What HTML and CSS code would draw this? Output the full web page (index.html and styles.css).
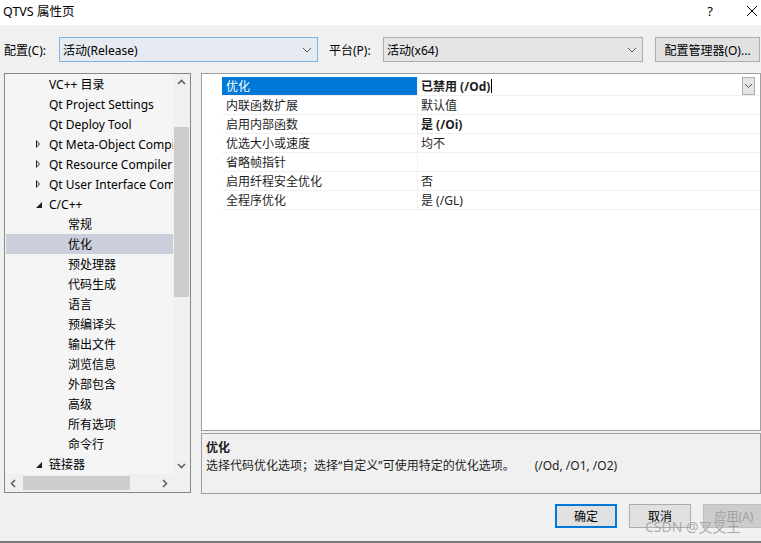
FILE: index.html
```html
<!DOCTYPE html>
<html lang="zh-CN">
<head>
    <meta charset="UTF-8">
    <meta name="viewport" content="width=device-width, initial-scale=1.0">
    <title>QTVS 属性页</title>
    <link rel="stylesheet" href="styles.css">
</head>
<body>

<div class="dialog">
    <div class="titlebar">
        <span class="title">QTVS 属性页</span>
        <span class="help">?</span>
        <svg class="close" width="12" height="12" viewBox="0 0 12 12">
            <path d="M1 1 L11 11 M11 1 L1 11" stroke="#000" stroke-width="1" fill="none"/>
        </svg>
    </div>

    <div class="config-row">
        <label class="cfg-label">配置(C):</label>
        <div class="combo combo-active">
            <span>活动(Release)</span>
            <svg class="chev" width="10" height="6" viewBox="0 0 10 6"><path d="M1 1 L5 5 L9 1" stroke="#555" fill="none"/></svg>
        </div>
        <label class="cfg-label plat-label">平台(P):</label>
        <div class="combo combo-plat">
            <span>活动(x64)</span>
            <svg class="chev" width="10" height="6" viewBox="0 0 10 6"><path d="M1 1 L5 5 L9 1" stroke="#555" fill="none"/></svg>
        </div>
        <button class="btn cfg-manager">配置管理器(O)...</button>
    </div>

    <div class="main">
        <div class="tree-box">
            <div class="tree-top">
                <ul class="tree">
                    <li class="lv1">VC++ 目录</li>
                    <li class="lv1">Qt Project Settings</li>
                    <li class="lv1">Qt Deploy Tool</li>
                    <li class="lv1 closed">Qt Meta-Object Compiler</li>
                    <li class="lv1 closed">Qt Resource Compiler</li>
                    <li class="lv1 closed">Qt User Interface Compiler</li>
                    <li class="lv1 open">C/C++</li>
                    <li class="lv2">常规</li>
                    <li class="lv2 selected">优化</li>
                    <li class="lv2">预处理器</li>
                    <li class="lv2">代码生成</li>
                    <li class="lv2">语言</li>
                    <li class="lv2">预编译头</li>
                    <li class="lv2">输出文件</li>
                    <li class="lv2">浏览信息</li>
                    <li class="lv2">外部包含</li>
                    <li class="lv2">高级</li>
                    <li class="lv2">所有选项</li>
                    <li class="lv2">命令行</li>
                    <li class="lv1 open">链接器</li>
                </ul>
                <div class="vscroll">
                    <svg class="arrow" width="17" height="17" viewBox="0 0 17 17"><path d="M5 10 L8.5 6.5 L12 10" stroke="#606060" stroke-width="1.6" fill="none"/></svg>
                    <div class="vthumb"></div>
                    <div class="vspace"></div>
                    <svg class="arrow" width="17" height="17" viewBox="0 0 17 17"><path d="M5 7 L8.5 10.5 L12 7" stroke="#606060" stroke-width="1.6" fill="none"/></svg>
                </div>
            </div>
            <div class="hscroll">
                <svg class="arrow" width="17" height="17" viewBox="0 0 17 17"><path d="M10 5 L6.5 8.5 L10 12" stroke="#606060" stroke-width="1.6" fill="none"/></svg>
                <div class="hthumb"></div>
                <div class="hspace"></div>
                <svg class="arrow" width="17" height="17" viewBox="0 0 17 17"><path d="M7 5 L10.5 8.5 L7 12" stroke="#606060" stroke-width="1.6" fill="none"/></svg>
                <div class="corner"></div>
            </div>
        </div>

        <div class="right">
            <div class="grid">
                <div class="prop selected">
                    <div class="pname">优化</div>
                    <div class="pvalue bold">已禁用 (/Od)<span class="caret"></span>
                        <span class="drop">
                            <svg width="9" height="6" viewBox="0 0 9 6"><path d="M1 1 L4.5 4.5 L8 1" stroke="#555" fill="none"/></svg>
                        </span>
                    </div>
                </div>
                <div class="prop"><div class="pname">内联函数扩展</div><div class="pvalue">默认值</div></div>
                <div class="prop"><div class="pname">启用内部函数</div><div class="pvalue bold">是 (/Oi)</div></div>
                <div class="prop"><div class="pname">优选大小或速度</div><div class="pvalue">均不</div></div>
                <div class="prop"><div class="pname">省略帧指针</div><div class="pvalue"></div></div>
                <div class="prop"><div class="pname">启用纤程安全优化</div><div class="pvalue">否</div></div>
                <div class="prop"><div class="pname">全程序优化</div><div class="pvalue">是 (/GL)</div></div>
            </div>
            <div class="desc">
                <div class="desc-title">优化</div>
                <div class="desc-text">选择代码优化选项；选择<span class="q">“</span>自定义<span class="q">”</span>可使用特定的优化选项。<span class="desc-flags">(/Od, /O1, /O2)</span></div>
            </div>
        </div>
    </div>

    <div class="footer">
        <button class="btn ok">确定</button>
        <button class="btn">取消</button>
        <button class="btn disabled">应用(A)</button>
        <span class="watermark">CSDN @叉叉王</span>
    </div>
</div>

</body>
</html>
```

FILE: styles.css
```css
* {
    box-sizing: border-box;
}

body {
    margin: 0;
    width: 761px;
    height: 543px;
    overflow: hidden;
    background-color: #f0f0f0;
    font-family: "Noto Sans", "Noto Sans CJK SC", sans-serif;
    font-size: 12px;
    color: #000;
}

.dialog {
    height: 543px;
    border-bottom: 2px solid #7a7a7a;
    display: flex;
    flex-direction: column;
}

.titlebar {
    height: 25px;
    background-color: #fff;
    display: flex;
    align-items: center;
    padding: 0 0 4px 3px;
}

.title {
    font-size: 12.5px;
    flex: 1;
}

.help {
    font-size: 13px;
    margin-right: 33px;
}

.close {
    margin-right: 3px;
}

.config-row {
    display: flex;
    align-items: center;
    margin-top: 12px;
    height: 25px;
}

.cfg-label {
    width: 59px;
    padding-left: 4px;
}

.plat-label {
    width: 65px;
    padding-left: 11px;
}

.combo {
    height: 25px;
    display: flex;
    align-items: center;
    justify-content: space-between;
    padding: 0 5px 0 3px;
}

.combo-active {
    width: 259px;
    border: 1px solid #7eb4ea;
    background-color: #e5ebf1;
}

.combo-plat {
    width: 260px;
    border: 1px solid #adadad;
    background-color: #e5e5e5;
}

.btn {
    font-family: inherit;
    font-size: 12px;
    height: 24px;
    width: 62px;
    border: 1px solid #adadad;
    background-color: #e1e1e1;
    color: #000;
    padding: 0;
}

.cfg-manager {
    width: 105px;
    height: 25px;
    margin-left: 12px;
}

.main {
    display: flex;
    margin-top: 11px;
    height: 421px;
}

.tree-box {
    width: 187px;
    margin-left: 4px;
    height: 420px;
    border: 1px solid #828790;
    background-color: #f5f5f5;
    display: flex;
    flex-direction: column;
}

.tree-top {
    display: flex;
    height: 400px;
}

.tree {
    list-style: none;
    margin: 0;
    padding: 0 0 0 1px;
    flex: 1;
    overflow: hidden;
    white-space: nowrap;
}

.tree li {
    height: 20px;
    line-height: 21px;
    position: relative;
}

.lv1 {
    padding-left: 43px;
}

.lv2 {
    padding-left: 62px;
}

.tree li.selected {
    background-color: #cccedb;
}

.closed::before {
    content: "";
    position: absolute;
    left: 30px;
    top: 6px;
    width: 0;
    height: 0;
    border-left: 4px solid #1e1e1e;
    border-top: 4px solid transparent;
    border-bottom: 4px solid transparent;
}

.closed::after {
    content: "";
    position: absolute;
    left: 31px;
    top: 8px;
    width: 0;
    height: 0;
    border-left: 2px solid #f5f5f5;
    border-top: 2px solid transparent;
    border-bottom: 2px solid transparent;
}

.open::before {
    content: "";
    position: absolute;
    left: 30px;
    top: 8px;
    width: 0;
    height: 0;
    border-right: 6px solid #1e1e1e;
    border-top: 6px solid transparent;
}

.vscroll {
    width: 17px;
    background-color: #f0f0f0;
    display: flex;
    flex-direction: column;
}

.arrow {
    flex: none;
}

.vthumb {
    margin-top: 36px;
    height: 170px;
    margin-left: 1px;
    width: 15px;
    background-color: #cdcdcd;
}

.vspace {
    flex: 1;
}

.hscroll {
    height: 18px;
    display: flex;
    align-items: center;
    background-color: #f0f0f0;
}

.hthumb {
    width: 107px;
    height: 14px;
    margin-left: 1px;
    background-color: #cdcdcd;
}

.hspace {
    flex: 1;
}

.corner {
    width: 17px;
    height: 18px;
    background-color: #f0f0f0;
}

.right {
    margin-left: 10px;
    width: 565px;
    display: flex;
    flex-direction: column;
}

.grid {
    height: 359px;
    border: 1px solid #a0a0a0;
    background-color: #fff;
    padding: 3px 0 0 20px;
}

.prop {
    display: flex;
    height: 19px;
    border-bottom: 1px solid #f0f0f0;
}

.pname {
    width: 196px;
    padding-left: 4px;
    line-height: 20px;
    border-right: 1px solid #f0f0f0;
    color: #1e1e1e;
}

.pvalue {
    flex: 1;
    padding-left: 3px;
    line-height: 20px;
    color: #1e1e1e;
    position: relative;
}

.bold {
    font-weight: bold;
}

.prop.selected .pname {
    background-color: #0078d7;
    color: #fff;
}

.caret {
    display: inline-block;
    width: 1px;
    height: 14px;
    background-color: #000;
    vertical-align: -2px;
    margin-left: 1px;
}

.drop {
    position: absolute;
    right: 5px;
    top: 0;
    width: 13px;
    height: 18px;
    border: 1px solid #adadad;
    background-color: #e5e5e5;
    display: flex;
    align-items: center;
    justify-content: center;
}

.desc {
    margin-top: 2px;
    height: 61px;
    border: 1px solid #a0a0a0;
    padding: 5px 4px;
    line-height: 18px;
    color: #1e1e1e;
}

.desc-title {
    font-weight: bold;
}

.desc .q {
    font-family: "Noto Sans", sans-serif;
}

.desc-flags {
    margin-left: 20px;
}

.footer {
    display: flex;
    justify-content: flex-end;
    gap: 12px;
    margin-top: 10px;
    margin-right: -4px;
    position: relative;
}

.btn.ok {
    border: 2px solid #0078d7;
}

.btn.disabled {
    background-color: #cccccc;
    border-color: #bfbfbf;
    color: #a0a0a0;
}

.watermark {
    position: absolute;
    left: 645px;
    top: 12px;
    font-size: 14px;
    color: rgba(150, 150, 150, 0.75);
    pointer-events: none;
}
```
